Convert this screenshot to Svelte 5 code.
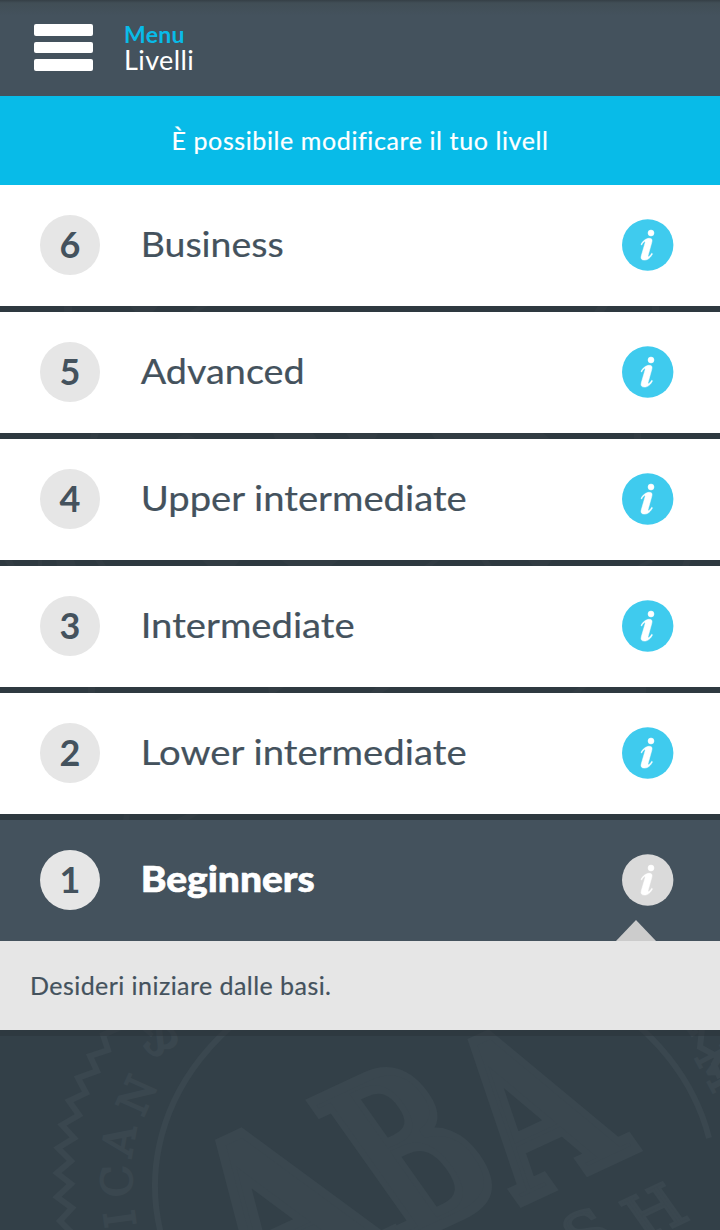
<script>
    let selected = $state(1);

    const levels = [
        { number: 6, name: 'Business', width: 143 },
        { number: 5, name: 'Advanced', width: 164 },
        { number: 4, name: 'Upper intermediate', width: 326 },
        { number: 3, name: 'Intermediate', width: 214 },
        { number: 2, name: 'Lower intermediate', width: 326 },
        { number: 1, name: 'Beginners', width: 174, description: 'Desideri iniziare dalle basi.' }
    ];

    // Teeth around the left side of the seal
    const teeth = '132,1022 103,1035 108,1050 90,1056 97,1071 78,1078 86,1093 69,1101 79,1115 62,1125 74,1138 58,1148 71,1161 57,1173 71,1184 57,1197 72,1208 60,1221 73,1234';
</script>

<div class="screen">
    <svg class="seal" viewBox="0 0 720 1230" aria-hidden="true">
        <polyline class="line" points={teeth} />
        <path class="line" d="M720 1078l-6-14 4-7-18-10 2-18" />
        <path class="line" d="M161 1234A280 233 0 1 1 709 1138" />
        <!-- Parts of the upper seal, seen in the gaps of the list -->
        <path d="M64 306h8v6h-8zM130 306h28l-5 6h-18zM198 306h10l-10 6h-9zM598 306h10l-4 6h-10zM652 306h7v6h-7z" />
        <path d="M91 433h8l-2 6h-7zM176 439q10-9 20 0zM273 433h40l4 6h-42zM346 433h32l-3 6h-25zM431 433h112l7 6H435zM634 433h7v6h-7z" />
        <path d="M4 560h8l3 6H8zM38 560h4v6h-4zM56 560h18l2 6H57zM95 560h7l4 6h-7zM202 560h38l-5 6h-27zM281 560h58l-8 6h-42zM433 560h7l-8 6h-8zM481 560h7l4 6h-7zM528 560h24l-5 6h-14zM648 560h8l-11 6h-8zM684 560h7l-2 6h-7z" />
        <path d="M88 687h7v6h-7zM268 687h16l-9 6h-6zM376 687h15l-9 6h-12zM579 687h8l-7 6h-9zM640 687h6v6h-6zM124 814h6l-1 6h-6zM187 814h12l-10 6h-14z" />
        <g class="ring">
            <text transform="translate(183 1040) rotate(-140) scale(1.1 1)">&amp;</text>
            <text transform="translate(143 1118) rotate(-66)">N</text>
            <text transform="translate(131 1158) rotate(-80)">A</text>
            <text transform="translate(132 1197) rotate(-91)">C</text>
            <text transform="translate(136 1225) rotate(-98)">I</text>
            <text transform="translate(676 1014) rotate(54)">E</text>
            <text transform="translate(694 1057) rotate(62)">M</text>
        </g>
        <g class="aba">
            <text transform="matrix(.9 -.42 .58 .82 258 1308)" textLength="158" lengthAdjust="spacingAndGlyphs">A</text>
            <text transform="matrix(.9 -.42 .58 .82 402 1243)" textLength="122" lengthAdjust="spacingAndGlyphs">B</text>
            <text transform="matrix(.9 -.42 .58 .82 522 1202)" textLength="126" lengthAdjust="spacingAndGlyphs">A</text>
        </g>
        <g class="english">
            <text transform="matrix(.9 -.42 .58 .82 582 1260)">S</text>
            <text transform="matrix(.9 -.42 .58 .82 643 1241)">H</text>
        </g>
    </svg>

    <header class="top-bar">
        <button class="menu-button" aria-label="Menu">
            <span></span>
            <span></span>
            <span></span>
        </button>
        <div class="heading">
            <div class="section">Menu</div>
            <h1>Livelli</h1>
        </div>
    </header>

    <p class="notice">È possibile modificare il tuo livell</p>

    <ul class="levels">
        {#each levels as level}
            <li class:selected={selected === level.number}>
                <button class="row" onclick={() => (selected = level.number)}>
                    <span class="number">{level.number}</span>
                    <svg class="name" width="400" height="60" viewBox="0 0 400 60">
                        <text x="0.7" y="42.4" textLength={level.width} lengthAdjust="spacingAndGlyphs">{level.name}</text>
                    </svg>
                    <svg class="info" width="52" height="52" viewBox="0 0 52 52">
                        <circle class="disc" cx="25.7" cy="26" r="25.7" />
                        <circle class="glyph" cx="29" cy="14" r="3" />
                        <path class="glyph" d="M19 25.5c1.8-3.8 5.2-6.2 8.3-6.2 2.6 0 3.2 1.4 2.5 4l-3.7 13.2c-.3 1.2.4 1.5 1.2.8 1-.8 1.8-2 2.4-3l.8.5c-1.8 3.9-4.8 6.3-8 6.3-2.9 0-4-1.5-3.2-4.3l3.8-13.1c.3-1.1-.4-1.4-1.2-.8-.9.7-1.6 1.8-2.2 3.1z" />
                    </svg>
                </button>
                {#if selected === level.number && level.description}
                    <p class="description">{level.description}</p>
                {/if}
            </li>
        {/each}
    </ul>
</div>

<style>
    :global(body) {
        background: #334048;
    }

    .screen {
        position: relative;
        height: 1230px;
        overflow: hidden;
        background: #334048;
        color: #44525d;
        font-family: Lato, 'Open Sans', sans-serif;
    }

    p,
    h1,
    ul {
        margin: 0;
        padding: 0;
    }

    button {
        padding: 0;
        border: 0;
        background: none;
        color: inherit;
        font: inherit;
        cursor: pointer;
    }

    /* Watermark behind the list */
    .seal {
        position: absolute;
        inset: 0;
        width: 720px;
        height: 1230px;
        fill: #3a474f;
        font-family: 'DejaVu Serif', serif;
    }

    .line {
        fill: none;
        stroke: #3a474f;
        stroke-width: 6;
    }

    .ring {
        font-size: 42px;
        stroke: #3a474f;
        stroke-width: 2;
    }

    .aba {
        font-size: 230px;
        font-weight: 700;
        stroke: #3a474f;
        stroke-width: 10;
    }

    .english {
        font-size: 62px;
        stroke: #3a474f;
        stroke-width: 3;
    }

    .top-bar {
        position: relative;
        display: flex;
        height: 96px;
        box-sizing: border-box;
        padding: 24px 34px;
        gap: 31px;
        background: linear-gradient(#353f46 0, #414e56 3px, #44525d 16px);
    }

    .menu-button {
        display: flex;
        flex-direction: column;
        gap: 6px;
        width: 59px;
    }

    .menu-button span {
        height: 11.5px;
        border-radius: 2px;
        background: #fff;
    }

    .heading {
        color: #fff;
        line-height: 26px;
        margin-top: -3px;
    }

    .section {
        color: #08bbe8;
        font-size: 23px;
        font-weight: 700;
        letter-spacing: 0.3px;
    }

    h1 {
        font-size: 27px;
        font-weight: 400;
        letter-spacing: 0.4px;
    }

    .notice {
        position: relative;
        height: 89px;
        background: #08bbe8;
        color: #fff;
        font-size: 25px;
        line-height: 88px;
        letter-spacing: 0.6px;
        text-align: center;
        -webkit-text-stroke: 0.2px currentColor;
    }

    .levels {
        position: relative;
        list-style: none;
    }

    li {
        border-bottom: 6px solid rgba(41, 50, 56, 0.5);
    }

    .row {
        display: flex;
        align-items: center;
        gap: 40px;
        width: 100%;
        height: 121px;
        padding: 0 46px 1px 40px;
        background: #fff;
        text-align: left;
    }

    .number {
        width: 60px;
        height: 60px;
        border-radius: 50%;
        background: #e6e6e6;
        color: #44525d;
        font-size: 36px;
        font-weight: 700;
        line-height: 59px;
        text-align: center;
    }

    .name {
        fill: currentColor;
        stroke: currentColor;
        stroke-width: 0.2;
        font-size: 35.5px;
    }

    .info {
        margin-left: auto;
    }

    .disc {
        fill: #3fcbee;
    }

    .glyph {
        fill: #fff;
        stroke: #fff;
        stroke-width: 0.5;
    }

    .selected .row {
        position: relative;
        background: #44525d;
        color: #fff;
    }

    .selected .row::after {
        content: '';
        position: absolute;
        right: 64px;
        bottom: 0;
        border: solid transparent;
        border-width: 0 20.5px 21px;
        border-bottom-color: #ccc;
    }

    .selected .name {
        font-weight: 900;
        stroke-width: 0.6;
    }

    .selected .disc {
        fill: #dadada;
    }

    .description {
        height: 89px;
        padding-left: 30px;
        background: #e6e6e6;
        font-size: 25px;
        line-height: 88px;
        letter-spacing: 0.45px;
        -webkit-text-stroke: 0.2px currentColor;
    }
</style>
